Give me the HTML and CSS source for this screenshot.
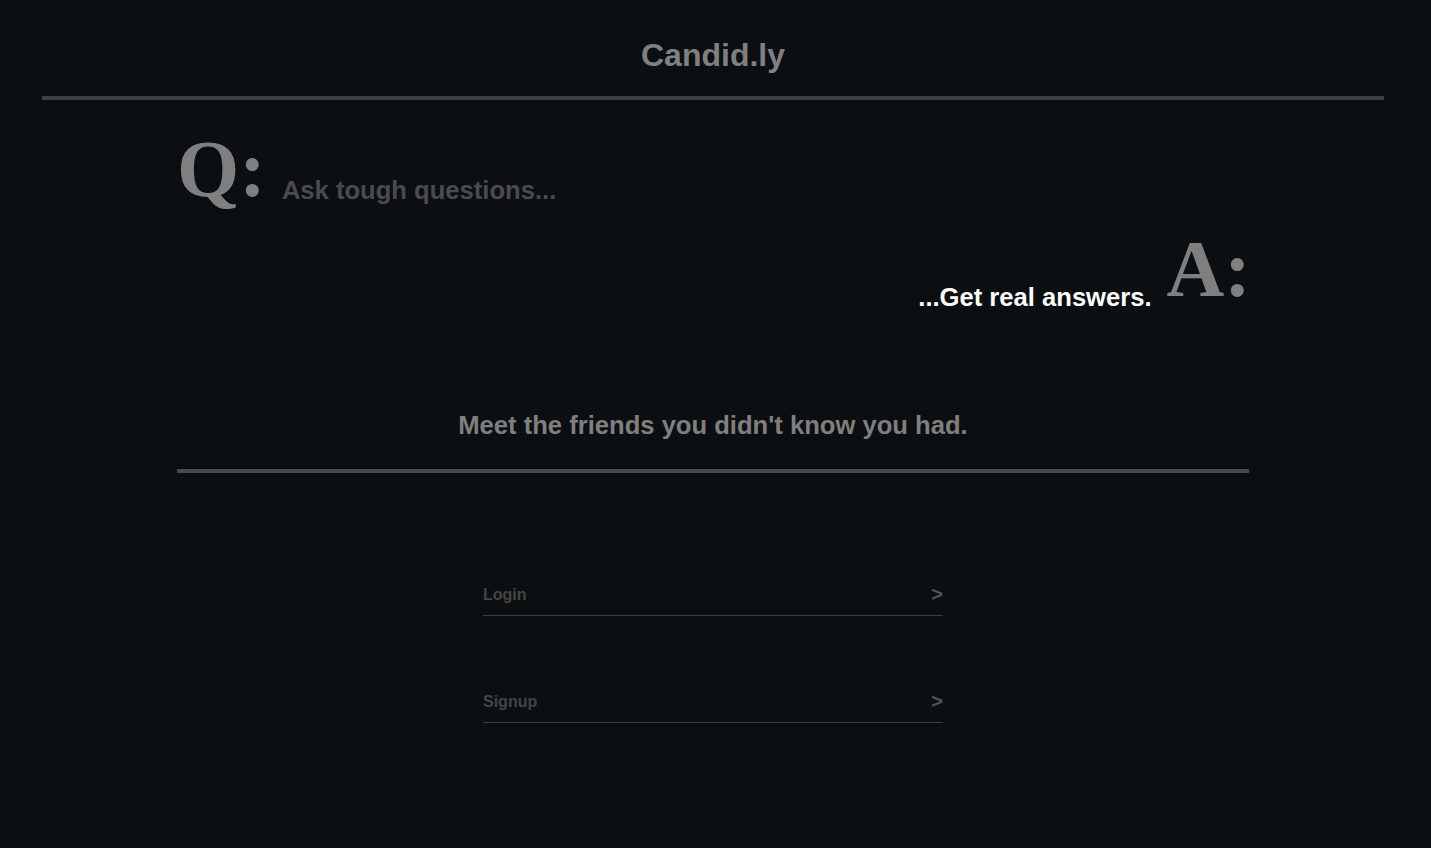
FILE: index.html
```html
<!DOCTYPE html>
<html lang="en">
<head>
<meta charset="utf-8">
<title>Candid.ly</title>
<link rel="stylesheet" href="styles.css">
</head>
<body>
<div class="page">
  <header class="site-header">
    <h1 class="brand">Candid.ly</h1>
  </header>
  <main class="content">
    <div class="qa-row qa-q">
      <span class="qa-letter">Q:</span><span class="qa-text qa-ask">Ask tough questions...</span>
    </div>
    <div class="qa-row qa-a">
      <span class="qa-text qa-answer">...Get real answers.</span><span class="qa-letter">A:</span>
    </div>
    <p class="tagline">Meet the friends you didn't know you had.</p>
  </main>
  <section class="actions">
    <a class="field field-login" href="#"><span class="field-label">Login</span><span class="field-arrow">&gt;</span></a>
    <a class="field field-signup" href="#"><span class="field-label">Signup</span><span class="field-arrow">&gt;</span></a>
  </section>
</div>
</body>
</html>
```

FILE: styles.css
```css
html, body {
  margin: 0;
  padding: 0;
  background: #0c0f12;
}
body {
  font-family: "Liberation Sans", Arial, Helvetica, sans-serif;
  min-height: 848px;
}
.page {
  width: 1426px;
}
.site-header {
  margin: 0 42px;
  border-bottom: 4px solid #404040;
  text-align: center;
}
.brand {
  margin: 0;
  padding: 37px 0 23px;
  font-size: 32px;
  line-height: 36px;
  font-weight: bold;
  color: #808080;
}
.content {
  width: 1072px;
  margin: 0 auto;
  border-bottom: 4px solid #4a4a4a;
}
.qa-row {
  line-height: 80px;
  height: 80px;
  white-space: nowrap;
}
.qa-q {
  margin-top: 29px;
  text-align: left;
}
.qa-a {
  margin-top: 20px;
  margin-right: -2px;
  text-align: right;
}
.qa-letter {
  font-family: "Liberation Serif", "Times New Roman", serif;
  font-weight: bold;
  font-size: 80px;
  color: #7f7f7f;
}
.qa-text {
  font-size: 25.6px;
  line-height: 1;
  font-weight: bold;
}
.qa-ask {
  color: #4b4b4b;
  margin-left: 16px;
  vertical-align: -3px;
}
.qa-answer {
  color: #ffffff;
  margin-right: 15px;
  vertical-align: -10px;
}
.tagline {
  margin: 101px 0 0;
  padding-bottom: 29px;
  font-size: 25.6px;
  line-height: 30px;
  font-weight: bold;
  color: #7f7f7f;
  text-align: center;
}
.actions {
  width: 460px;
  margin: 110px auto 0;
  display: flex;
  flex-direction: column;
  gap: 74px;
}
.field {
  display: flex;
  justify-content: space-between;
  align-items: baseline;
  padding-bottom: 10px;
  border-bottom: 1px solid #3b3e42;
  line-height: 20px;
  text-decoration: none;
}
.field-label {
  font-size: 16px;
  font-weight: bold;
  color: #454545;
}
.field-arrow {
  font-size: 20px;
  font-weight: bold;
  color: #555555;
  position: relative;
  top: 1px;
}
```
